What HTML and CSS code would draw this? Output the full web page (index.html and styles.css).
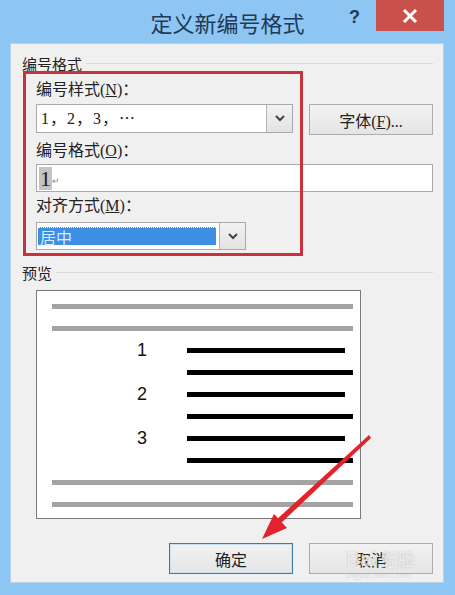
FILE: index.html
```html
<!DOCTYPE html>
<html lang="zh-CN">
<head>
    <meta charset="UTF-8">
    <title>定义新编号格式</title>
    <link rel="stylesheet" href="styles.css">
</head>
<body>
    <div class="window">
        <div class="titlebar">
            <div></div>
            <div class="title">定义新编号格式</div>
            <div class="title-buttons">
                <span class="help">?</span>
                <span class="close">
                    <svg width="16" height="16" viewBox="0 0 16 16"><path d="M2 2 L14 14 M14 2 L2 14" stroke="#fff" stroke-width="3"/></svg>
                </span>
            </div>
        </div>

        <div class="panel">
            <!-- 编号格式 group -->
            <div class="group-head"><span>编号格式</span><i></i></div>
            <div class="fields">
                <div class="label">编号样式(<u>N</u>)：</div>
                <div class="row">
                    <div class="combo combo-style">
                        <span class="combo-text">1，2，3，⋯</span>
                        <span class="drop"><svg width="10" height="7" viewBox="0 0 10 7"><path d="M1 1 L5 5 L9 1" fill="none" stroke="#444" stroke-width="2"/></svg></span>
                    </div>
                    <button class="btn">字体(<u>F</u>)...</button>
                </div>
                <div class="label label-mid">编号格式(<u>O</u>)：</div>
                <div class="textbox"><span class="sel-num">1</span><span class="para">↵</span></div>
                <div class="label label-low">对齐方式(<u>M</u>)：</div>
                <div class="combo combo-align">
                    <span class="combo-sel">居中</span>
                    <span class="drop"><svg width="10" height="7" viewBox="0 0 10 7"><path d="M1 1 L5 5 L9 1" fill="none" stroke="#444" stroke-width="2"/></svg></span>
                </div>
            </div>

            <!-- 预览 group -->
            <div class="group-head preview-head"><span>预览</span><i></i></div>
            <div class="preview">
                <div class="pv-row"><b class="bar gray"></b></div>
                <div class="pv-row"><b class="bar gray"></b></div>
                <div class="pv-row"><span class="num">1</span><b class="bar black short"></b></div>
                <div class="pv-row indent"><b class="bar black"></b></div>
                <div class="pv-row"><span class="num">2</span><b class="bar black short"></b></div>
                <div class="pv-row indent"><b class="bar black"></b></div>
                <div class="pv-row"><span class="num">3</span><b class="bar black short"></b></div>
                <div class="pv-row indent"><b class="bar black"></b></div>
                <div class="pv-row"><b class="bar gray"></b></div>
                <div class="pv-row"><b class="bar gray"></b></div>
            </div>

            <div class="actions">
                <button class="btn btn-default">确定</button>
                <button class="btn">取消</button>
            </div>
        </div>

        <!-- annotation overlays -->
        <div class="mark-box"></div>
        <svg class="arrow" width="455" height="595" viewBox="0 0 455 595">
            <polygon points="369,435 371,438 279,525 275,521" fill="#e3232b"/>
            <polygon points="262,539 274,514 287,528" fill="#e3232b"/>
        </svg>
        <div class="watermark">Bai<span>经验</span><small>jingyan.baidu.com</small></div>
    </div>
</body>
</html>
```

FILE: styles.css
```css
/* Page */
body {
    margin: 0;
    background: #8ec6f3;
    font-family: "Liberation Serif", "Noto Sans CJK SC", serif;
}

.window {
    position: relative;
    width: 455px;
    height: 595px;
    background: #8ec6f3;
    display: flex;
    flex-direction: column;
    overflow: hidden;
}

/* Title bar */
.titlebar {
    height: 43px;
    display: grid;
    grid-template-columns: 1fr auto 1fr;
    align-items: start;
}

.title {
    font-family: "Noto Sans CJK SC", sans-serif;
    font-size: 22px;
    line-height: 30px;
    margin-top: 7px;
    color: #1f3a58;
}

.title-buttons {
    display: flex;
    justify-content: flex-end;
    align-items: flex-start;
    margin-right: 11px;
}

.help {
    font-family: "Liberation Sans", sans-serif;
    font-weight: bold;
    font-size: 18px;
    line-height: 20px;
    margin-top: 7px;
    margin-right: 16px;
    color: #1f3a58;
}

.close {
    width: 68px;
    height: 31px;
    background: #c9504b;
    display: flex;
    justify-content: center;
    align-items: center;
}

/* Dialog body */
.panel {
    flex: 1;
    margin: 0 11px 12px 10px;
    border: 1px solid #b7d3ec;
    background: #f0f0f0;
    padding: 9px 10px 0 11px;
    font-family: "Liberation Serif", "Noto Sans CJK SC", serif;
    font-size: 15px;
    color: #222;
}

.group-head {
    display: flex;
    align-items: center;
    height: 20px;
    font-family: "Noto Sans CJK SC", sans-serif;
    font-size: 15px;
}

.group-head i {
    flex: 1;
    border-top: 1px solid #dadada;
    margin-left: 4px;
    margin-top: 0;
}

.fields {
    padding-left: 14px;
}

.label {
    height: 20px;
    line-height: 20px;
    margin-top: 7px;
    font-size: 16px;
}

.label-mid {
    margin-top: 6px;
}

.label-low {
    margin-top: 4px;
}

.row {
    display: flex;
    align-items: flex-start;
    gap: 16px;
    margin-top: 4px;
}

.combo {
    box-sizing: border-box;
    height: 29px;
    background: #fff;
    border: 1px solid #a9a9a9;
    display: flex;
    align-items: stretch;
}

.combo-style {
    width: 257px;
}

.combo-text {
    flex: 1;
    padding-left: 4px;
    line-height: 27px;
    font-size: 16px;
    letter-spacing: 1px;
}

.drop {
    width: 25px;
    border-left: 1px solid #b4b4b4;
    background: linear-gradient(#f2f2f2, #e3e3e3);
    display: flex;
    justify-content: center;
    align-items: center;
}

.combo-align {
    width: 210px;
    height: 28px;
    margin-top: 6px;
}

.combo-sel {
    flex: 1;
    margin: 4px 3px 4px 1px;
    background: #3c8fe3;
    color: #d8ecff;
    font-family: "Noto Sans CJK SC", sans-serif;
    font-size: 16px;
    line-height: 18px;
    padding-left: 2px;
    border-top: 1px dotted #fff;
}

.textbox {
    box-sizing: border-box;
    height: 28px;
    margin-top: 3px;
    background: #fff;
    border: 1px solid #a9a9a9;
    display: flex;
    align-items: center;
    padding-left: 2px;
}

.sel-num {
    background: #c4c4c4;
    font-size: 22px;
    line-height: 23px;
    padding: 0 1px;
    color: #222;
}

.para {
    font-size: 9px;
    color: #888;
    margin-top: 6px;
}

/* Buttons */
.btn {
    box-sizing: border-box;
    width: 124px;
    height: 31px;
    border: 1px solid #adadad;
    background: linear-gradient(#f2f2f2, #e5e5e5);
    font-family: "Liberation Serif", "Noto Sans CJK SC", serif;
    font-size: 16px;
    color: #222;
    padding: 0;
}

.btn-default {
    border-color: #3d7bad;
    box-shadow: inset 0 0 0 1px #c8e0f2;
}

/* Preview */
.preview-head {
    margin-top: 12px;
}

.preview {
    box-sizing: border-box;
    width: 325px;
    height: 229px;
    margin: 8px 0 0 14px;
    background: #fff;
    border: 1px solid #7a7a7a;
    padding: 13px 7px 0 15px;
}

.pv-row {
    height: 22px;
    display: flex;
    align-items: flex-start;
}

.bar {
    display: block;
    height: 5px;
    flex: 1;
}

.gray {
    background: #a3a3a3;
}

.black {
    background: #000;
}

.short {
    flex: none;
    width: 158px;
}

.indent {
    padding-left: 135px;
}

.num {
    width: 20px;
    margin-left: 80px;
    margin-right: 35px;
    height: 5px;
    line-height: 5px;
    text-align: center;
    font-family: "Liberation Sans", sans-serif;
    font-size: 18px;
    color: #111;
}

.actions {
    display: flex;
    justify-content: flex-end;
    gap: 16px;
    margin-top: 24px;
}

/* Annotations drawn over the screenshot */
.mark-box {
    position: absolute;
    left: 23px;
    top: 71px;
    width: 280px;
    height: 185px;
    box-sizing: border-box;
    border: 3px solid #c8323c;
}

.arrow {
    position: absolute;
    left: 0;
    top: 0;
    pointer-events: none;
}

.watermark {
    position: absolute;
    left: 346px;
    top: 546px;
    font-family: "Liberation Sans", "Noto Sans CJK SC", sans-serif;
    font-size: 20px;
    font-weight: bold;
    color: rgba(255, 255, 255, 0.75);
    text-shadow: 0 0 1px rgba(120, 120, 120, 0.6);
}

.watermark span {
    font-size: 17px;
    margin-left: 4px;
}

.watermark small {
    display: block;
    font-size: 8px;
    font-weight: normal;
    color: rgba(200, 200, 200, 0.5);
    text-shadow: none;
}
```
